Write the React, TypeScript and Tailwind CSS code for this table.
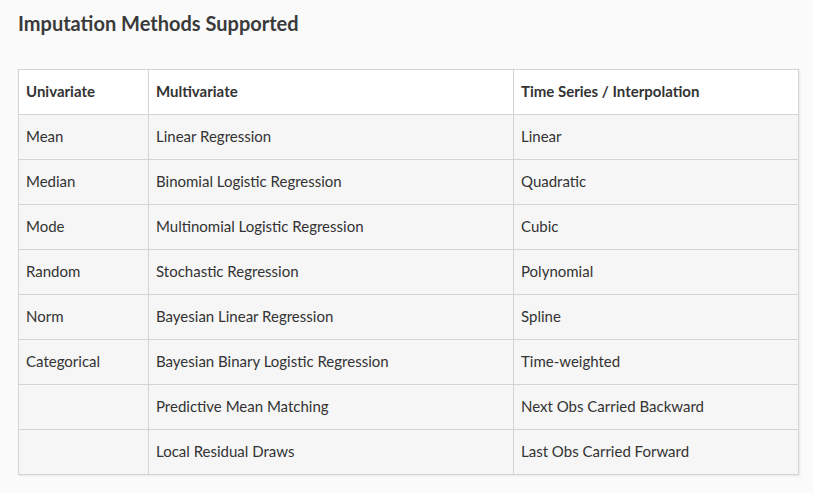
import React from 'react';

const header = ['Univariate', 'Multivariate', 'Time Series / Interpolation'];

const rows: string[][] = [
    ['Mean', 'Linear Regression', 'Linear'],
    ['Median', 'Binomial Logistic Regression', 'Quadratic'],
    ['Mode', 'Multinomial Logistic Regression', 'Cubic'],
    ['Random', 'Stochastic Regression', 'Polynomial'],
    ['Norm', 'Bayesian Linear Regression', 'Spline'],
    ['Categorical', 'Bayesian Binary Logistic Regression', 'Time-weighted'],
    ['', 'Predictive Mean Matching', 'Next Obs Carried Backward'],
    ['', 'Local Residual Draws', 'Last Obs Carried Forward'],
];

const App: React.FC = () => {
    return (
        <div className="min-h-[493px] w-full bg-[#fafafa] px-[18px] pt-[10px] text-[#333] font-['Lato',sans-serif]">
            <h2 className="text-[20px] font-bold leading-[26px] text-[#3a3a3a]">Imputation Methods Supported</h2>
            <table className="mt-[33px] w-[781px] border-collapse text-[15px] shadow-[1px_1px_2px_rgba(0,0,0,0.08)]">
                <thead className="bg-white">
                    <tr>
                        {header.map((heading, index) => (
                            <th
                                key={index}
                                className={`h-[45px] border border-[#d4d4d4] px-[7px] pb-[2px] text-left font-bold text-[#333] ${index === 0 ? 'w-[130px]' : index === 1 ? 'w-[365px]' : ''}`}
                            >
                                {heading}
                            </th>
                        ))}
                    </tr>
                </thead>
                <tbody>
                    {rows.map((row, rowIndex) => (
                        <tr key={rowIndex} className="bg-[#f6f6f6]">
                            {row.map((cell, cellIndex) => (
                                <td key={cellIndex} className="h-[45px] border border-[#d4d4d4] px-[7px] pb-[2px] text-[#333]">
                                    {cell}
                                </td>
                            ))}
                        </tr>
                    ))}
                </tbody>
            </table>
        </div>
    );
};

export default App;
